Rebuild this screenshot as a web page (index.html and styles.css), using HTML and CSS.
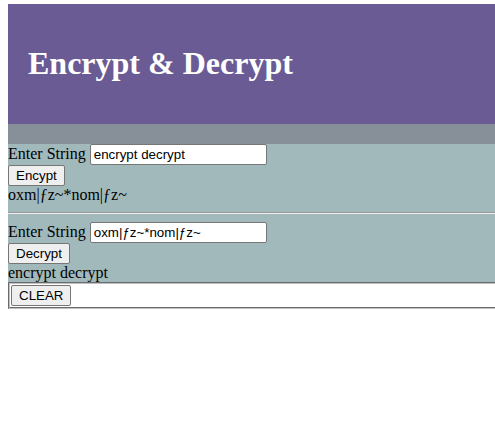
FILE: index.html
```html
<!DOCTYPE html>
<html>
<head>
<meta charset="utf-8">
<title>Encrypt &amp; Decrypt</title>
<link rel="stylesheet" href="styles.css">
</head>
<body>
<header class="banner"><h1 class="title">Encrypt &amp; Decrypt</h1></header>
<div class="band"></div>
<main class="panel">
  <section class="tool">
    <label class="label">Enter String</label> <input class="field" type="text" value="encrypt decrypt"><br>
    <button class="btn">Encypt</button>
    <div class="result">oxm|ƒz~*nom|ƒz~</div>
  </section>
  <hr class="rule">
  <section class="tool">
    <label class="label">Enter String</label> <input class="field" type="text" value="oxm|ƒz~*nom|ƒz~"><br>
    <button class="btn">Decrypt</button>
    <div class="result">encrypt decrypt</div>
  </section>
</main>
<div class="clear"><button class="btn btn-clear">CLEAR</button></div>
</body>
</html>
```

FILE: styles.css
```css
html, body {
  overflow-x: hidden;
}
body {
  margin: 4px 0 0 8px;
  font-family: "Liberation Serif", "Times New Roman", serif;
  font-size: 16px;
  color: #000;
  background: #fff;
}
.banner {
  background: #6b5b95;
  padding: 20px;
}
.title {
  margin: 0.67em 0;
  font-size: 32px;
  font-weight: bold;
  color: #fff;
  font-family: "Liberation Serif", "Times New Roman", serif;
}
.band {
  height: 20px;
  background: #878f99;
}
.panel {
  background: #a2b9bc;
}
.rule {
  margin: 8px 0;
  border: none;
  border-top: 1px solid #9a9a9a;
  border-bottom: 1px solid #eeeeee;
  height: 0;
}
.field {
  font-family: "Liberation Sans", Arial, sans-serif;
  font-size: 13.333px;
  width: 177px;
  padding: 1px 3px;
  border: 1px solid #767676;
  border-radius: 2px;
  background: #fff;
  margin: 0;
  height: 21px;
  box-sizing: border-box;
  vertical-align: baseline;
}
.btn {
  font-family: "Liberation Sans", Arial, sans-serif;
  font-size: 13.333px;
  padding: 1px 7px;
  height: 21px;
  box-sizing: border-box;
  background: #efefef;
  border: 1px solid #767676;
  border-radius: 2px;
  color: #000;
  margin: 0;
}
.result {
  line-height: normal;
}
.clear {
  background: #fff;
  border: 2px groove #c0c0c0;
  border-right: none;
  padding: 1px;
}
.btn-clear {
  padding: 1px 7px;
}
```
